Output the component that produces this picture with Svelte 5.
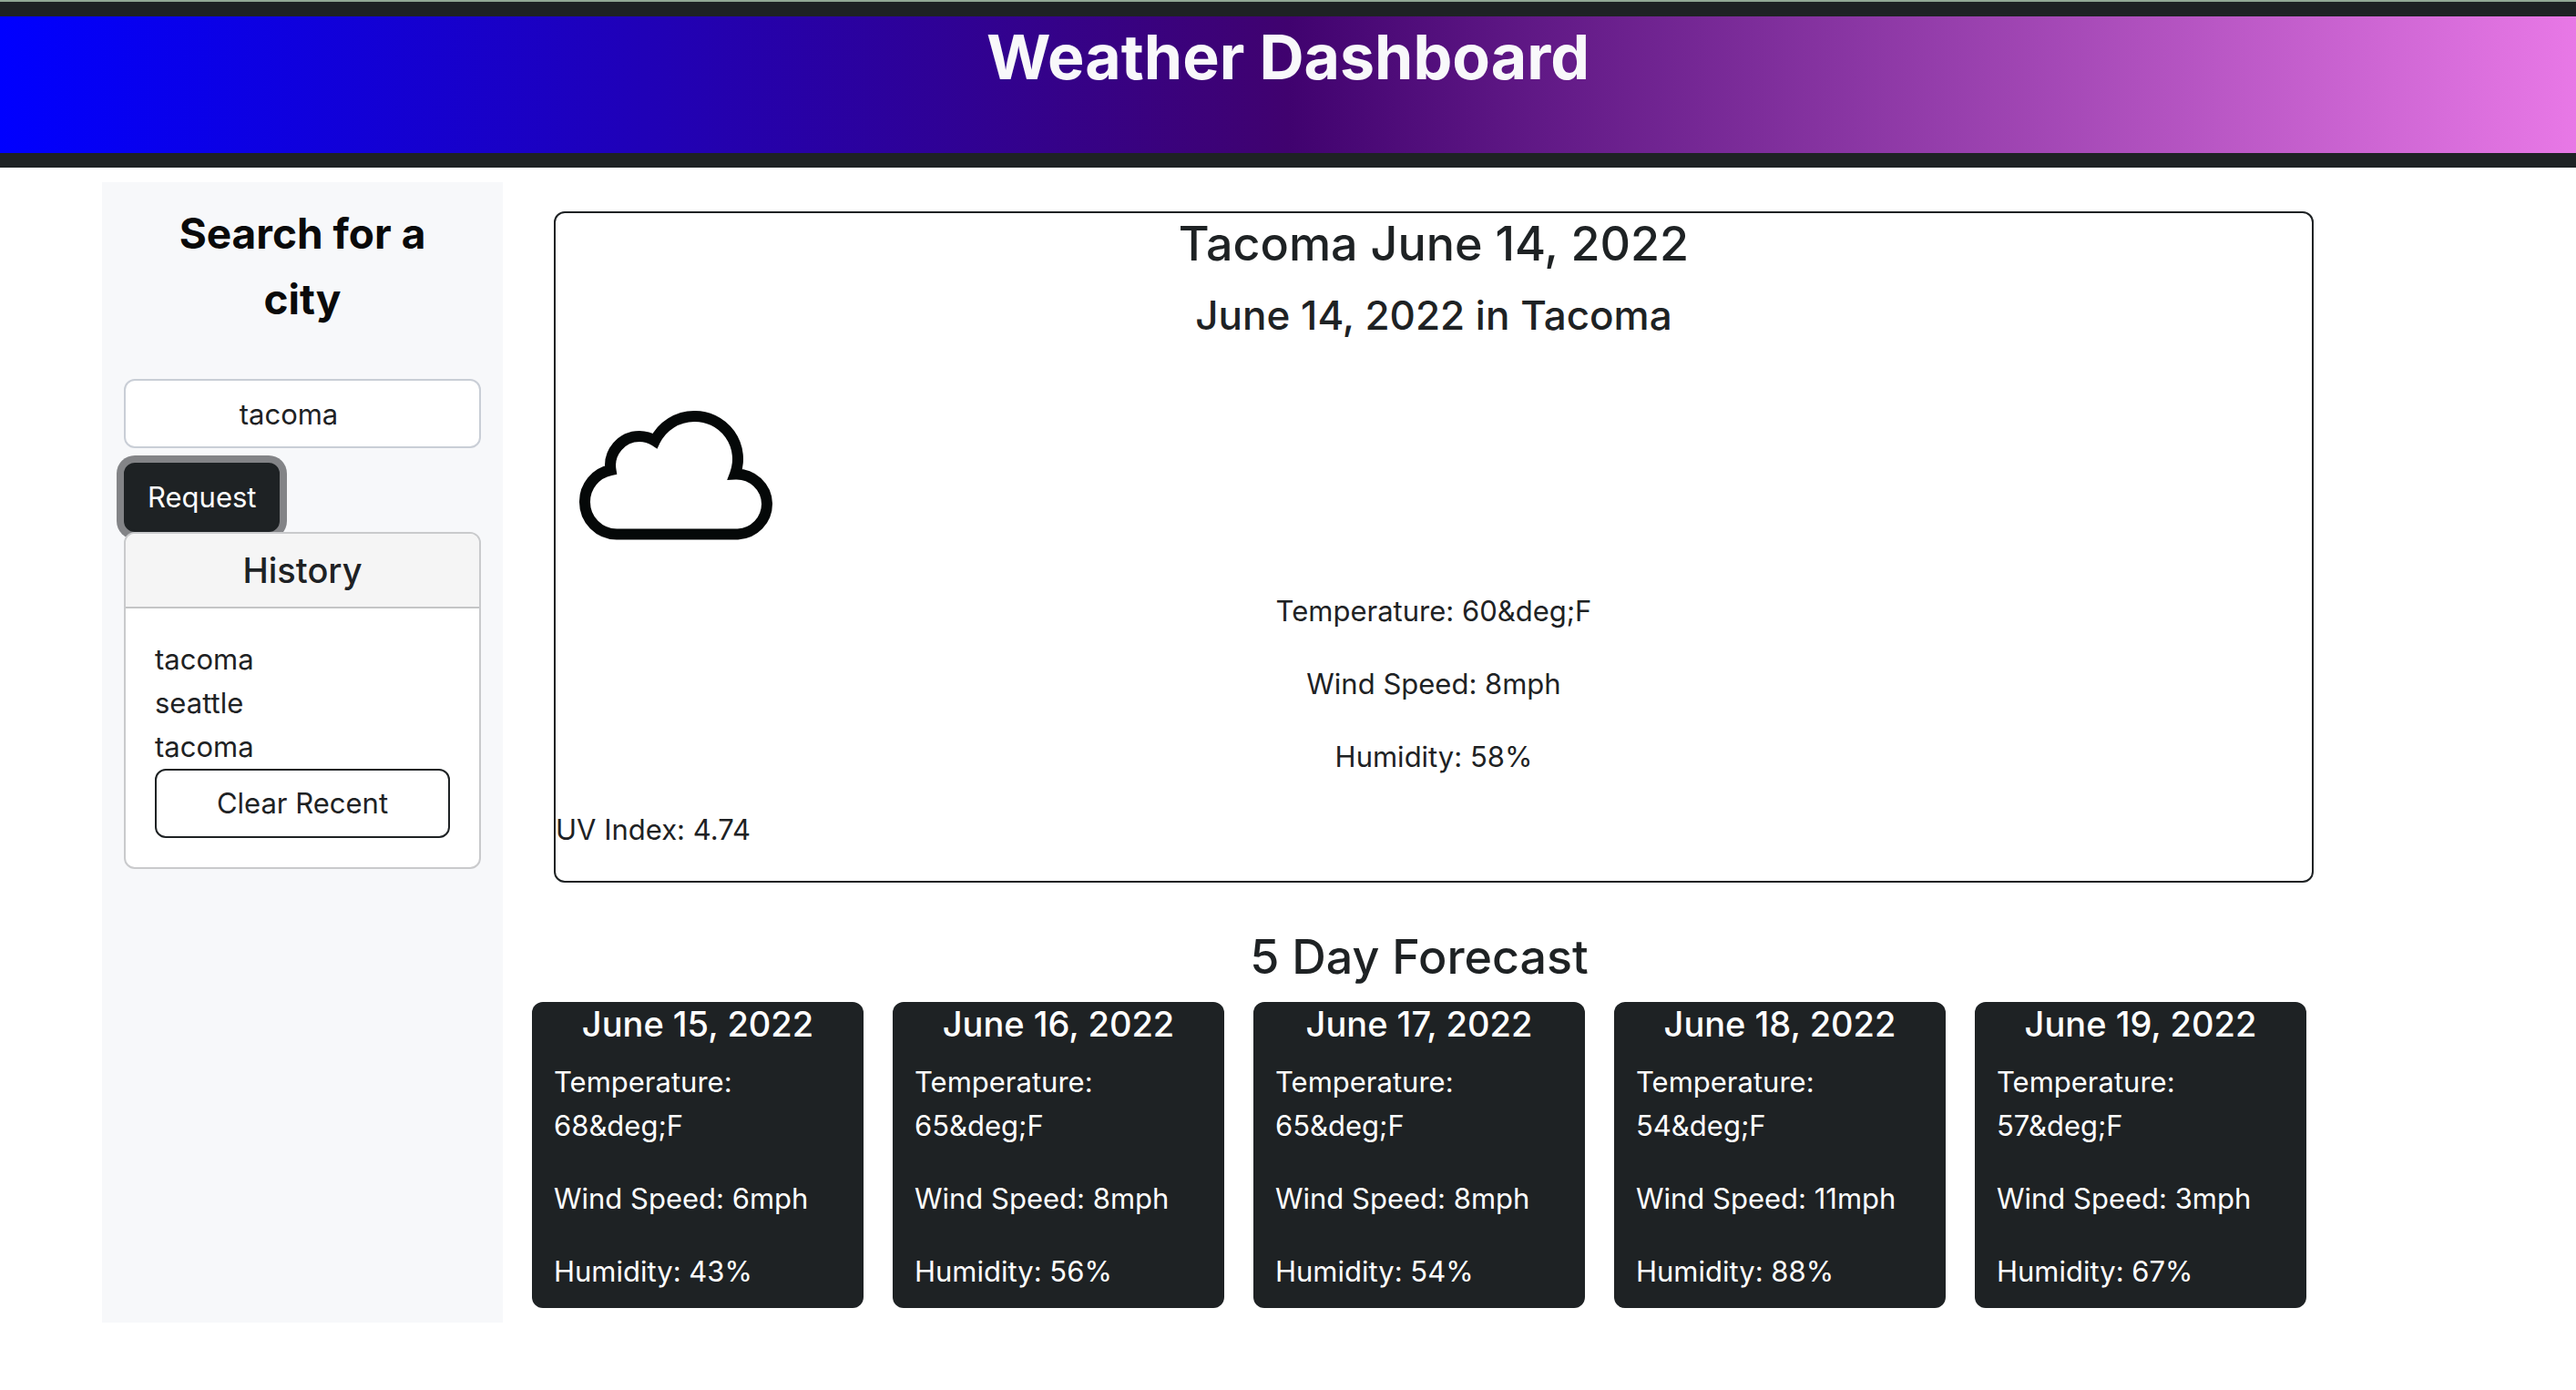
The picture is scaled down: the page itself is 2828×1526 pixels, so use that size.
<script>
  let city = $state('tacoma');
  let history = $state(['tacoma', 'seattle', 'tacoma']);

  const unit = '&deg;F';
  const forecast = [
    { date: 'June 15, 2022', temp: 68, wind: 6, humidity: 43 },
    { date: 'June 16, 2022', temp: 65, wind: 8, humidity: 56 },
    { date: 'June 17, 2022', temp: 65, wind: 8, humidity: 54 },
    { date: 'June 18, 2022', temp: 54, wind: 11, humidity: 88 },
    { date: 'June 19, 2022', temp: 57, wind: 3, humidity: 67 }
  ];

  function request(event) {
    event.preventDefault();
    if (city.trim()) history.push(city.trim());
  }
</script>

<header class="banner">
  <h1>Weather Dashboard</h1>
</header>

<div class="layout">
  <aside class="sidebar">
    <form class="search" onsubmit={request}>
      <label for="city">Search for a city</label>
      <input id="city" type="text" autocomplete="off" bind:value={city} />
      <button class="request" type="submit">Request</button>
    </form>
    <section class="history">
      <h4>History</h4>
      <div class="history-body">
        <ul>
          {#each history as item}
            <li>{item}</li>
          {/each}
        </ul>
        <button class="clear" type="button" onclick={() => (history = [])}>Clear Recent</button>
      </div>
    </section>
  </aside>

  <main>
    <section class="current">
      <h2>Tacoma June 14, 2022</h2>
      <h3>June 14, 2022 in Tacoma</h3>
      <svg class="cloud" viewBox="0 0 256 256" role="img" aria-label="Cloudy">
        <path d="M67 195.5 A35.3 35.3 0 0 1 32 160 A35.3 35.3 0 0 1 60.5 125 A32 32 0 0 1 92 88 A32 32 0 0 1 109 93 A48 48 0 0 1 152 66 A47 47 0 0 1 197 129.5 A33.4 33.4 0 0 1 232 162 A33.4 33.4 0 0 1 200 195.5 Z" />
      </svg>
      <p>Temperature: 60{unit}</p>
      <p>Wind Speed: 8mph</p>
      <p>Humidity: 58%</p>
      <p class="uv">UV Index: 4.74</p>
    </section>

    <section class="forecast">
      <h2>5 Day Forecast</h2>
      <div class="days">
        {#each forecast as day}
          <article class="day">
            <h4>{day.date}</h4>
            <p>Temperature: {day.temp}{unit}</p>
            <p>Wind Speed: {day.wind}mph</p>
            <p>Humidity: {day.humidity}%</p>
          </article>
        {/each}
      </div>
    </section>
  </main>
</div>

<style>
  :global(body) {
    background: #fff;
    color: #1e2224;
    font-family: Inter, 'Liberation Sans', sans-serif;
    font-size: 31px;
    line-height: 48px;
  }

  :global(*) {
    box-sizing: border-box;
  }

  h1, h2, h3, h4, p, ul {
    margin: 0;
    padding: 0;
  }

  h2, h3, h4 {
    font-weight: 500;
    text-align: center;
  }

  h2 {
    font-size: 52px;
    line-height: 67px;
    margin-bottom: 16px;
  }

  h3 {
    font-size: 44px;
    line-height: 58px;
  }

  h4 {
    font-size: 38px;
    line-height: 48px;
  }

  input, button {
    font: inherit;
    border-radius: 12px;
    height: 76px;
    border: 2px solid #1e2224;
  }

  button {
    cursor: pointer;
  }

  .banner {
    border-top: 2px solid #92a895;
    background: #1e2224;
    padding: 16px 0;
  }

  h1 {
    background: linear-gradient(to right, #0000ff, #40026f, #e878e6);
    color: #f8f8fa;
    font-size: 68px;
    font-weight: 700;
    line-height: 88px;
    padding-bottom: 62px;
    text-align: center;
  }

  .layout {
    display: grid;
    grid-template-columns: 440px minmax(0, 1fr);
    gap: 32px;
    padding: 16px 296px 72px 112px;
  }

  .sidebar {
    background: #f7f8fa;
    padding: 20px 24px;
  }

  .search {
    display: flex;
    flex-direction: column;
    align-items: flex-start;
  }

  label {
    width: 100%;
    color: #0a0a0a;
    font-size: 46px;
    font-weight: 700;
    line-height: 72px;
    padding: 0 48px;
    margin-bottom: 52px;
    text-align: center;
  }

  input {
    width: 100%;
    background: #fff;
    border-color: #c9ced6;
    color: inherit;
    padding: 12px 54px 12px 24px;
    margin-bottom: 16px;
    text-align: center;
  }

  .request {
    background: #1e2224;
    color: #fff;
    padding: 0 24px;
    outline: none;
    box-shadow: 0 0 0 8px #838487;
  }

  .history {
    position: relative;
    background: #fff;
    border: 2px solid #c9cacc;
    border-radius: 12px;
    overflow: hidden;
  }

  .history h4 {
    background: #f5f5f5;
    border-bottom: 2px solid #c4c5c6;
    padding: 16px;
  }

  .history-body {
    padding: 32px;
  }

  ul {
    list-style: none;
  }

  .clear {
    width: 100%;
    background: #fff;
    color: inherit;
    display: block;
  }

  main {
    padding-bottom: 16px;
  }

  .current {
    border: 2px solid #1e2224;
    border-radius: 12px;
    margin: 32px -8px 48px 24px;
    text-align: center;
  }

  .current p {
    margin-bottom: 32px;
  }

  .current .uv {
    text-align: left;
  }

  .cloud {
    display: block;
    width: 256px;
    height: 256px;
    margin: 16px 0 0;
    fill: none;
    stroke: #050808;
    stroke-width: 12px;
  }

  .days {
    display: grid;
    grid-template-columns: repeat(5, minmax(0, 1fr));
    gap: 32px;
  }

  .day {
    background: #1e2224;
    border-radius: 12px;
    color: #fff;
    display: flex;
    flex-direction: column;
    gap: 32px;
    padding: 0 24px 16px;
  }

  .day h4 {
    margin-bottom: -16px;
  }
</style>
